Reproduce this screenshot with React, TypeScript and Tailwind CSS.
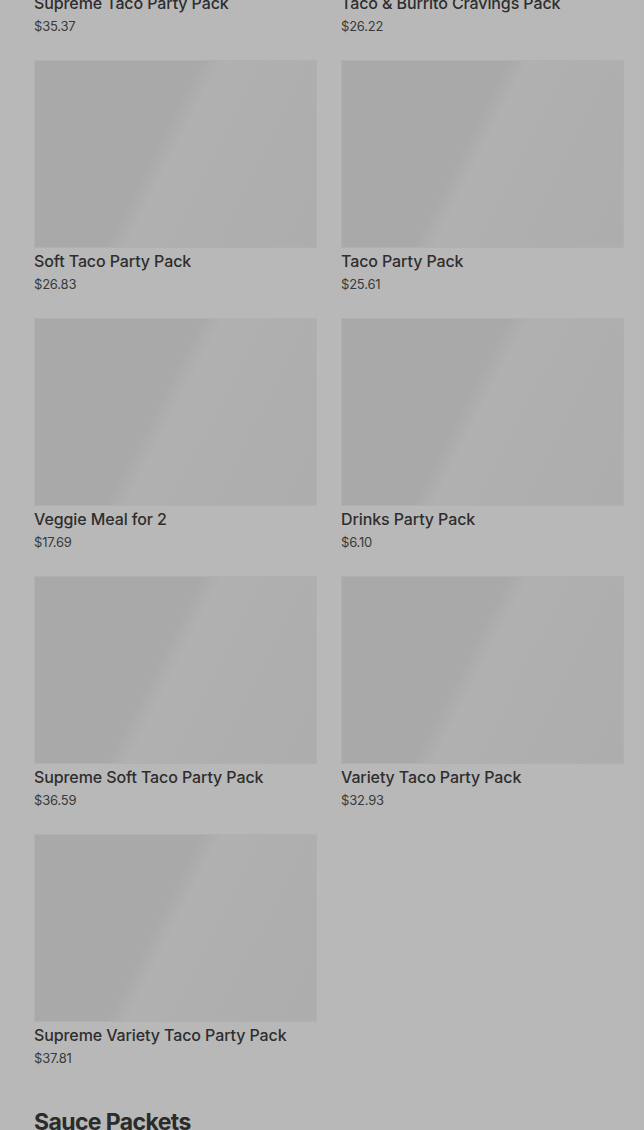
import React from "react";

const items: { name: string; price: string }[] = [
  { name: "Supreme Taco Party Pack", price: "$35.37" },
  { name: "Taco & Burrito Cravings Pack", price: "$26.22" },
  { name: "Soft Taco Party Pack", price: "$26.83" },
  { name: "Taco Party Pack", price: "$25.61" },
  { name: "Veggie Meal for 2", price: "$17.69" },
  { name: "Drinks Party Pack", price: "$6.10" },
  { name: "Supreme Soft Taco Party Pack", price: "$36.59" },
  { name: "Variety Taco Party Pack", price: "$32.93" },
  { name: "Supreme Variety Taco Party Pack", price: "$37.81" },
];

function Card({ name, price }: { name: string; price: string }) {
  return (
    <div className="flex flex-col">
      <div className="h-[188px] w-full border border-[#b0b0b0] bg-[linear-gradient(117deg,#a9a9a9_0%,#a9a9a9_44%,#b1b1b1_50%,#afafaf_68%,#adadad_100%)]" />
      <div className="mt-px text-[16px] leading-6 font-medium text-[#2e2e2e] tracking-[-0.1px]">
        {name}
      </div>
      <div className="mt-px text-[13px] leading-5 text-[#3a3a3a] tracking-[-0.2px]">{price}</div>
    </div>
  );
}

export default function App() {
  return (
    <div
      className="w-[644px] h-[1130px] overflow-hidden bg-[#b8b8b8]"
      style={{ fontFamily: "Inter, 'Noto Sans', sans-serif" }}
    >
      <div className="mt-[-198px] pl-[34px] pr-[20px]">
        <div className="grid grid-cols-2 gap-x-6 gap-y-6">
          {items.map((it) => (
            <Card key={it.name} name={it.name} price={it.price} />
          ))}
        </div>
        <h2 className="mt-[38px] text-[23px] leading-8 font-bold text-[#2b2b2b] tracking-[-0.6px]">
          Sauce Packets
        </h2>
      </div>
    </div>
  );
}
